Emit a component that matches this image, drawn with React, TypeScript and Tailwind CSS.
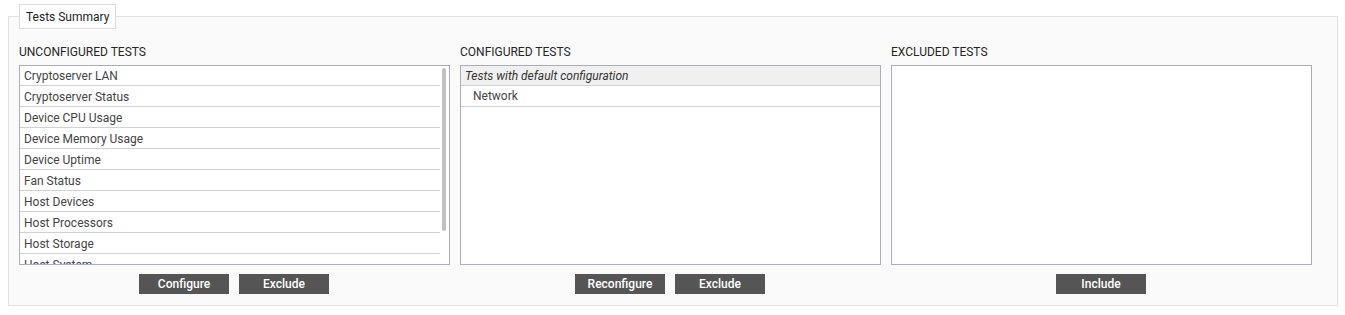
import React from "react";

const unconfigured = [
  "Cryptoserver LAN",
  "Cryptoserver Status",
  "Device CPU Usage",
  "Device Memory Usage",
  "Device Uptime",
  "Fan Status",
  "Host Devices",
  "Host Processors",
  "Host Storage",
  "Host System",
];

function Button({ label }: { label: string }) {
  return (
    <button className="w-[90px] h-[20px] bg-[#555555] text-white text-[12px] font-medium leading-[20px]">
      {label}
    </button>
  );
}

function Column({
  title,
  width,
  children,
  buttons,
}: {
  title: string;
  width: string;
  children: React.ReactNode;
  buttons: string[];
}) {
  return (
    <div className={`flex flex-col ${width}`}>
      <h3 className="text-[12px] leading-[16px] text-[#262626] uppercase mb-[5px]">{title}</h3>
      <div className="h-[200px] border border-[#aaadb9] bg-white overflow-hidden">{children}</div>
      <div className="flex justify-center gap-[10px] mt-[9px] pr-[1px]">
        {buttons.map((b) => (
          <Button key={b} label={b} />
        ))}
      </div>
    </div>
  );
}

export default function App() {
  return (
    <div className="pt-[4px] pl-2 pr-[7px] font-['Roboto',sans-serif]">
      <fieldset className="border border-[#e1e1e1] bg-[#fafafa] px-[10px] pt-[15px] pb-[11px]">
        <legend className="border border-[#dcdcdc] bg-white px-[6px] h-[25px] leading-[24px] text-[12px] text-[#222]">
          Tests Summary
        </legend>

        <div className="flex gap-[10px]">
          <Column title="Unconfigured Tests" width="w-[431px]" buttons={["Configure", "Exclude"]}>
            <div className="flex h-full">
              <div className="w-[420px] flex flex-col -mt-px">
                {unconfigured.map((t) => (
                  <div
                    key={t}
                    className="h-[21px] shrink-0 flex items-center pl-[4px] pt-px border-b border-[#cfd1d8] text-[12px] text-[#444]"
                  >
                    {t}
                  </div>
                ))}
              </div>
              <div className="flex-1 pl-[2px] pt-[2px]">
                <div className="w-[4px] h-[163px] rounded-full bg-[#c1c1c1]" />
              </div>
            </div>
          </Column>

          <Column title="Configured Tests" width="w-[421px]" buttons={["Reconfigure", "Exclude"]}>
            <div className="h-[20px] flex items-center pl-[4px] bg-[#f0f0f0] border-b border-[#cfd1d8] text-[12px] italic text-[#333]">
              Tests with default configuration
            </div>
            <div className="h-[21px] flex items-center pl-[12px] border-b border-[#cfd1d8] text-[12px] text-[#444]">
              Network
            </div>
          </Column>

          <Column title="Excluded Tests" width="w-[421px]" buttons={["Include"]}>
            <div />
          </Column>
        </div>
      </fieldset>
    </div>
  );
}
